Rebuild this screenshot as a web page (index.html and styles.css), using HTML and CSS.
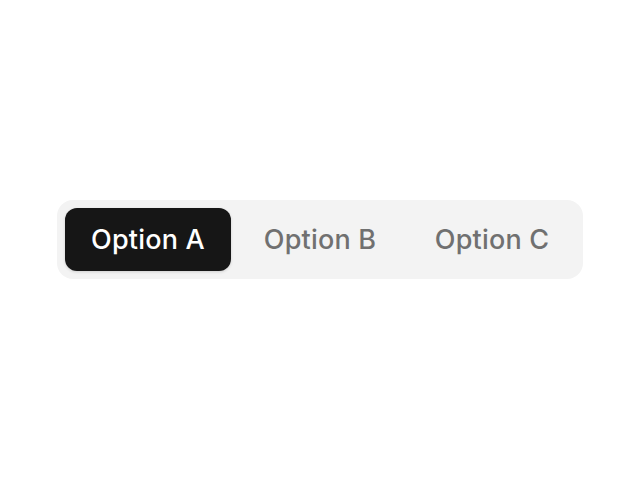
FILE: index.html
```html
<!DOCTYPE html>
<html lang="en">
<head>
  <meta charset="UTF-8" />
  <title>Segmented control</title>
  <link rel="stylesheet" href="styles.css">
</head>
<body>
  <div class="page">
    <div class="segmented" role="tablist">
      <button class="segment active" role="tab">Option A</button>
      <button class="segment" role="tab">Option B</button>
      <button class="segment" role="tab">Option C</button>
    </div>
  </div>
</body>
</html>
```

FILE: styles.css
```css
* { margin: 0; padding: 0; box-sizing: border-box; }

html, body {
  height: 100%;
  background: #ffffff;
  font-family: Inter, "Liberation Sans", sans-serif;
}

.page {
  height: 100%;
  display: flex;
  align-items: center;
  justify-content: center;
}

.segmented {
  width: 526px;
  height: 79px;
  padding: 8px;
  display: flex;
  gap: 6px;
  background: #f3f3f3;
  border-radius: 16px;
}

.segment {
  flex: 1;
  border: none;
  background: transparent;
  border-radius: 12px;
  font-family: inherit;
  font-size: 27px;
  font-weight: 500;
  letter-spacing: 0.2px;
  color: #707070;
  cursor: pointer;
}

.segment.active {
  background: #161616;
  color: #ffffff;
  box-shadow: 0 1px 3px rgba(0, 0, 0, 0.15);
}
```
